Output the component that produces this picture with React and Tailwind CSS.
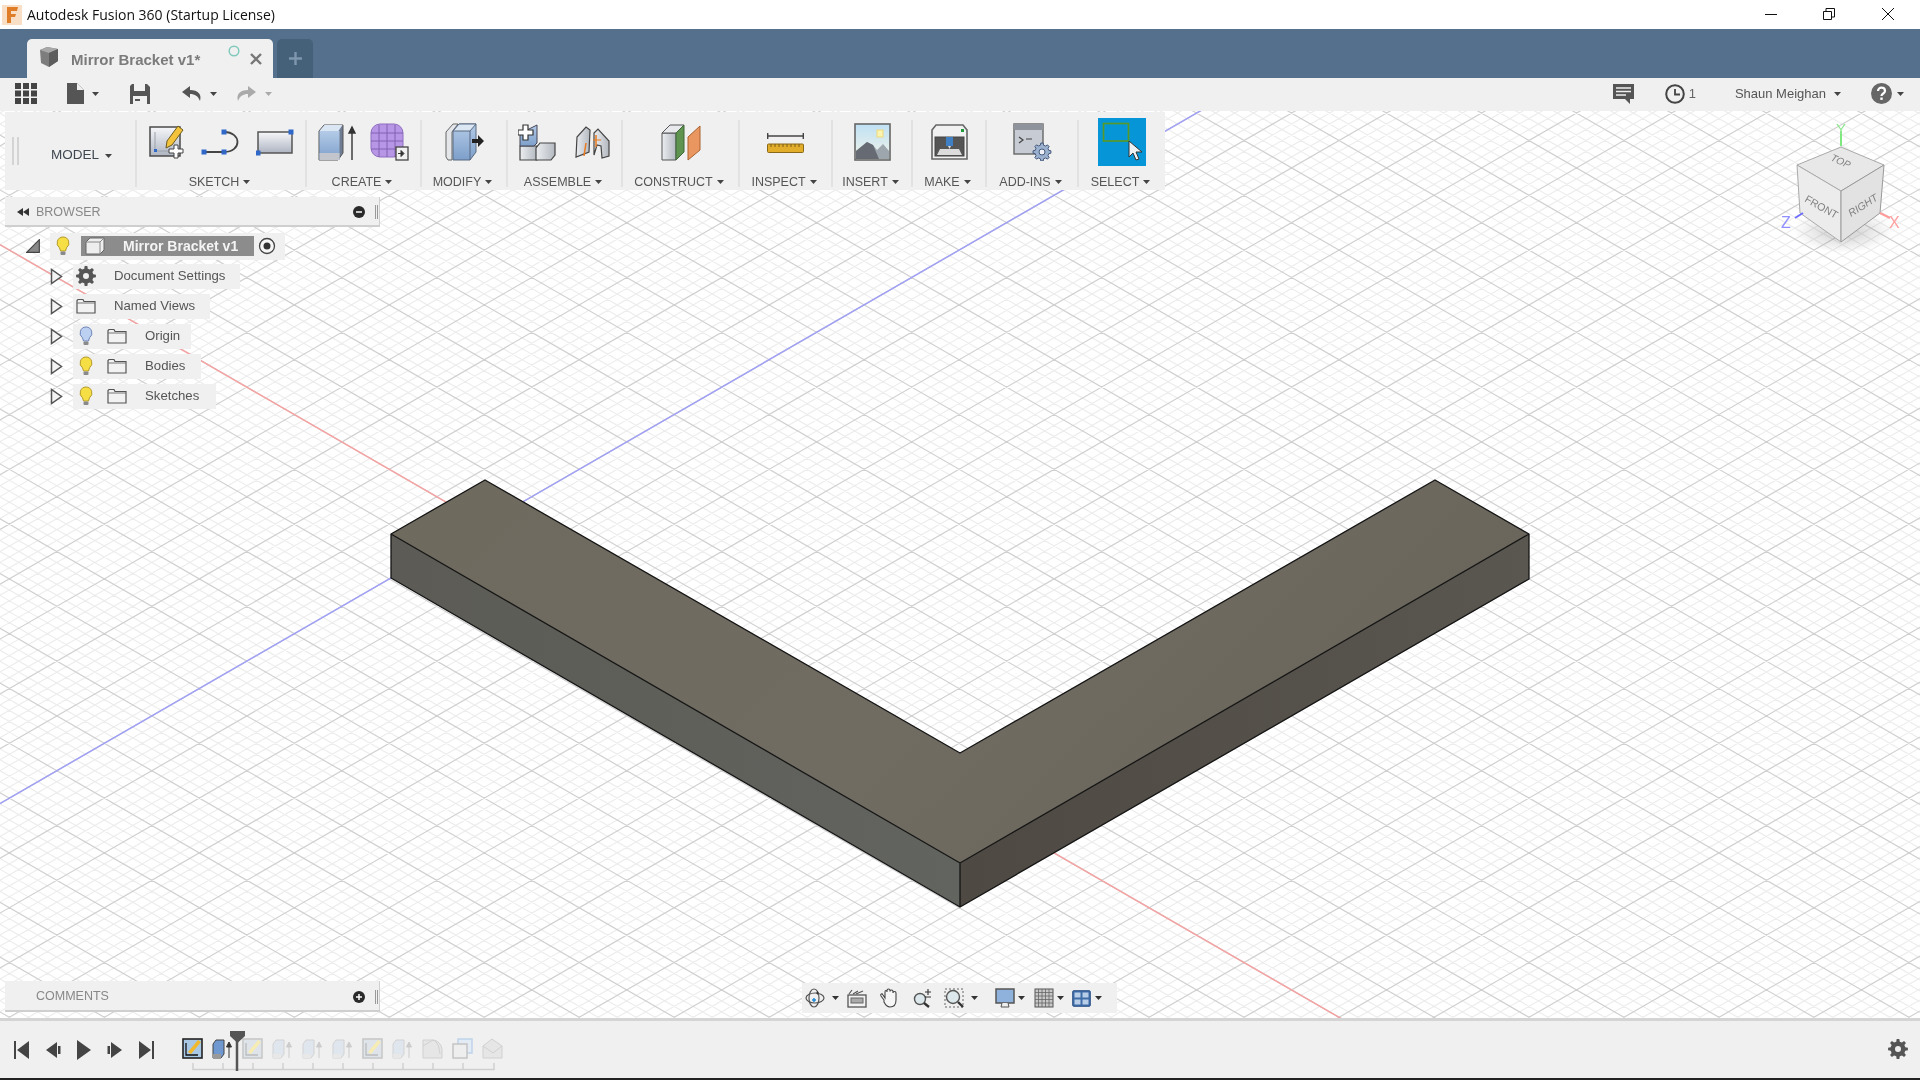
const M = 0.577;
function gridPaths() {
  let minor = "", major = "";
  const step = 54.8 / 5;
  for (let k = -300; k <= 200; k++) {
    const c = 628.3 + k * step;
    const d = `M0 ${c.toFixed(1)}L1920 ${(c + M * 1920).toFixed(1)}`;
    if (k % 5 === 0) major += d; else minor += d;
  }
  for (let k = -120; k <= 400; k++) {
    const c = 858.3 + k * step;
    const d = `M0 ${c.toFixed(1)}L1920 ${(c - M * 1920).toFixed(1)}`;
    if (k % 5 === 0) major += d; else minor += d;
  }
  return { minor, major };
}

function gearPath(cx, cy, ro, ri, n) {
  let d = "";
  const st = (Math.PI * 2) / n;
  for (let i = 0; i < n; i++) {
    const a = i * st;
    const pts = [[a - st * 0.3, ri], [a - st * 0.17, ro], [a + st * 0.17, ro], [a + st * 0.3, ri]];
    pts.forEach(([t, r], j) => {
      d += `${i === 0 && j === 0 ? "M" : "L"}${(cx + r * Math.cos(t)).toFixed(2)} ${(cy + r * Math.sin(t)).toFixed(2)}`;
    });
  }
  return d + "Z";
}

const Caret = ({ c = "#444" }) => (
  <svg width="7" height="4" viewBox="0 0 7 4" className="shrink-0"><path d="M0 0h7L3.5 4z" fill={c} /></svg>
);

const Defs = () => (
  <svg className="absolute w-0 h-0">
    <defs>
      <linearGradient id="gw" x1="0" y1="0" x2="0" y2="1"><stop offset="0" stopColor="#f6f7f9" /><stop offset="1" stopColor="#aeb4c2" /></linearGradient>
      <linearGradient id="gb" x1="0" y1="0" x2="0" y2="1"><stop offset="0" stopColor="#b4cbe8" /><stop offset="1" stopColor="#7d9fca" /></linearGradient>
      <linearGradient id="gg" x1="0" y1="0" x2="1" y2="0"><stop offset="0" stopColor="#eceef0" /><stop offset="1" stopColor="#b3b8c0" /></linearGradient>
      <linearGradient id="gs" x1="0" y1="0" x2="0" y2="1"><stop offset="0" stopColor="#bfe0f4" /><stop offset="1" stopColor="#f2f4e8" /></linearGradient>
      <linearGradient id="gt" x1="0" y1="0" x2="1" y2="0.35"><stop offset="0" stopColor="#6f6a5e" /><stop offset="0.6" stopColor="#716c62" /><stop offset="1" stopColor="#69655b" /></linearGradient>
      <linearGradient id="gl" x1="0" y1="0" x2="1" y2="0"><stop offset="0" stopColor="#5c5b55" /><stop offset="1" stopColor="#62645f" /></linearGradient>
      <linearGradient id="gr" x1="0" y1="0" x2="1" y2="0"><stop offset="0" stopColor="#4e4943" /><stop offset="1" stopColor="#5a5750" /></linearGradient>
      <radialGradient id="gsh"><stop offset="0" stopColor="#000" stopOpacity="0.2" /><stop offset="1" stopColor="#000" stopOpacity="0" /></radialGradient>
    </defs>
  </svg>
);

const Sq = ({ x, y }) => <rect x={x - 2.5} y={y - 2.5} width="5" height="5" fill="#2f68c8" />;

const ISketch = () => (
  <svg width="36" height="36" viewBox="0 0 36 36">
    <rect x="1" y="3" width="30" height="29" fill="url(#gw)" stroke="#4a4a4a" strokeWidth="1.5" />
    <path d="M6 8v19h20" fill="none" stroke="#9aa0aa" />
    <rect x="5" y="25" width="3" height="3" fill="#2f68c8" />
    <path d="M18 17L29 2l5 4-11 15-6 3z" fill="#f3c33c" stroke="#6a5a20" />
    <path d="M25 21h4v4h5v4h-5v5h-4v-5h-5v-4h5z" fill="#fff" stroke="#444" />
  </svg>
);
const ILine = () => (
  <svg width="39" height="28" viewBox="0 0 39 28">
    <path d="M3 24H23M23 4C41 4 41 24 23 24" fill="none" stroke="#444" strokeWidth="1.8" />
    <Sq x="3" y="24" /><Sq x="23" y="24" /><Sq x="23" y="4" />
  </svg>
);
const IRect = () => (
  <svg width="38" height="27" viewBox="0 0 38 27">
    <rect x="2" y="3" width="34" height="21" fill="url(#gw)" stroke="#555" strokeWidth="1.5" />
    <Sq x="35" y="3" /><Sq x="2" y="24" />
  </svg>
);
const IExtrude = () => (
  <svg width="38" height="38" viewBox="0 0 38 38">
    <path d="M1 8l5-6h19v28l-5 7H1z" fill="#6f7c92" stroke="#555" />
    <rect x="1.5" y="8" width="20" height="29" fill="url(#gb)" />
    <rect x="1.5" y="30" width="20" height="7" fill="#c2c6cc" />
    <path d="M1.5 8l5-6h18l-4 6z" fill="#dbe6f4" />
    <path d="M34 37V8M34 4l-3 6h6z" fill="#333" stroke="#333" strokeWidth="1.4" />
  </svg>
);
const IMesh = () => (
  <svg width="39" height="38" viewBox="0 0 39 38">
    <rect x="1" y="1" width="32" height="33" rx="9" fill="#b896e6" stroke="#8e6cc0" />
    <path d="M1 10h32M1 18h32M1 26h32M9 2v32M17 1v33M25 2v32" stroke="#7d5cae" strokeWidth="0.9" />
    <rect x="26" y="24" width="12" height="13" fill="#f0f0f0" stroke="#444" strokeWidth="1.3" />
    <path d="M28 30.500h4M31 27.500l3 3-3 3z" fill="#333" stroke="#333" />
  </svg>
);
const IModify = () => (
  <svg width="39" height="38" viewBox="0 0 39 38">
    <path d="M1 34V9l7-8h5L7 9v28H3z" fill="#e4e6ea" stroke="#666" />
    <path d="M8 37V8l6-7h17v28l-6 8z" fill="url(#gb)" stroke="#586880" />
    <path d="M8 8l6-7h17l-6 7z" fill="#dce7f4" stroke="#586880" />
    <path d="M25 8h0v29" stroke="#586880" />
    <path d="M27 16h6v-4l6 6-6 6v-4h-6z" fill="#222" />
  </svg>
);
const IAssemble = () => (
  <svg width="38" height="37" viewBox="0 0 38 37">
    <path d="M2 32V18h17v14z" fill="url(#gg)" stroke="#444" strokeWidth="1.2" transform="translate(0 4)" />
    <path d="M18 36V24l4-5h15v12l-4 5z" fill="url(#gg)" stroke="#444" strokeWidth="1.2" />
    <path d="M2 22V7h5l12-6v18l-3 3z" fill="url(#gb)" stroke="#445" strokeWidth="1" />
    <path d="M5 1h5v5h5v5h-5v5H5v-5H0V6h5z" fill="#fff" stroke="#333" strokeWidth="1.2" />
  </svg>
);
const IJoint = () => (
  <svg width="37" height="34" viewBox="0 0 37 34">
    <path d="M2 32L3 12 12 2l4 3-1 22z" fill="url(#gg)" stroke="#444" strokeWidth="1.2" />
    <path d="M20 30V8l4-4 11 12v15l-7 2-1-12-4-1z" fill="url(#gg)" stroke="#444" strokeWidth="1.2" />
    <path d="M12 18l-2 13M22 10v12" stroke="#e87a20" strokeWidth="1.5" />
    <path d="M19 15h8" stroke="#e87a20" />
  </svg>
);
const IConstruct = () => (
  <svg width="40" height="38" viewBox="0 0 40 38">
    <path d="M1 37V10h14v27z" fill="url(#gg)" stroke="#555" />
    <path d="M1 10l8-8h14l-8 8z" fill="#e8eaed" stroke="#555" />
    <path d="M15 37V10l8-8v27z" fill="#5f9350" stroke="#3f6636" />
    <path d="M27 37V14L39 3v24z" fill="#ea9660" stroke="#a8622e" />
  </svg>
);
const IInspect = () => (
  <svg width="37" height="21" viewBox="0 0 37 21">
    <path d="M.7 1v6M36.300 1v6M1 4h35" stroke="#444" strokeWidth="1.4" fill="none" />
    <rect x=".5" y="12" width="36" height="8.500" rx="1" fill="#e3ad2c" stroke="#8a6a18" />
    <path d="M4 12v3M8 12v3M12 12v3M16 12v3M20 12v3M24 12v3M28 12v3M32 12v3" stroke="#7a5c10" />
  </svg>
);
const IInsert = () => (
  <svg width="37" height="38" viewBox="0 0 37 38">
    <rect x="1" y="1" width="35" height="36" fill="url(#gs)" stroke="#666" strokeWidth="1.6" />
    <rect x="23" y="7" width="6" height="7" fill="#fbf3b0" stroke="#efd97a" />
    <path d="M2 36V28L13 19l6 3 4 5 6-6 6 7v8z" fill="#9da5ad" />
    <path d="M2 36V28L13 19l6 3 6 14z" fill="#666b73" />
  </svg>
);
const IMake = () => (
  <svg width="37" height="37" viewBox="0 0 37 37">
    <path d="M1 6l4-5h27l4 5v29H1z" fill="#f1f1f1" stroke="#666" strokeWidth="1.6" />
    <rect x="4" y="13" width="29" height="19" fill="#555" stroke="#444" />
    <rect x="15" y="13" width="7" height="9" fill="#3f7fc4" />
    <path d="M17 22h3l-1.500 3z" fill="#ddd" />
    <path d="M6 31l3-6h19l3 6z" fill="#dcdcdc" />
    <rect x="30" y="5" width="3" height="3" fill="#1d9a3a" />
  </svg>
);
const IAddins = () => (
  <svg width="39" height="38" viewBox="0 0 39 38">
    <rect x="1" y="1" width="29" height="30" fill="#c6cbd4" stroke="#666" strokeWidth="1.4" />
    <rect x="1" y="1" width="29" height="6" fill="#8f949c" />
    <path d="M6 14l4 3-4 3M13 16h6" stroke="#444" strokeWidth="1.2" fill="none" />
    <path d={gearPath(29, 29, 9, 7, 8)} fill="#9cb0cf" stroke="#465a7c" />
    <circle cx="29" cy="29" r="3" fill="#eef2f8" stroke="#465a7c" />
  </svg>
);
const ISelect = () => (
  <div className="w-[48px] h-[48px] bg-[#0696d7] shrink-0">
    <svg width="48" height="48" viewBox="0 0 48 48">
      <rect x="5.500" y="5.500" width="25" height="17.500" fill="none" stroke="#57982b" strokeWidth="1.7" />
      <path d="M31 23l0 16 4-4 3 7 3-1-3-7h6z" fill="#eef1f4" stroke="#333" strokeWidth="1" />
    </svg>
  </div>
);

const Group = ({ label, w, gap, children }) => (
  <div className={`flex flex-col items-center border-l-2 border-[#e2e2e2] mt-[8px] mb-[3px] ${w}`}>
    <div className={`h-[40px] mt-[2px] flex items-center justify-center ${gap}`}>{children}</div>
    <div className="mt-[15px] h-[10px] leading-[10px] text-[12.500px] text-[#555] flex items-center gap-[4px] whitespace-nowrap pr-[3px]">
      <span>{label}</span><Caret />
    </div>
  </div>
);

const Toolbar = () => (
  <div className="ml-[5px] w-[1160px] h-[78px] mt-px bg-[#f0f0f0] flex">
    <div className="w-[130px] flex items-center">
      <div className="ml-[7px] w-[7px] h-[28px] border-x-2 border-[#d4d4d4]" />
      <div className="ml-[32px] text-[13.500px] text-[#3f4852] flex items-center gap-[6px] mt-[9px]"><span>MODEL</span><Caret /></div>
    </div>
    <Group label="SKETCH" w="w-[170px]" gap="gap-[16px]"><ISketch /><ILine /><IRect /></Group>
    <Group label="CREATE" w="w-[115px]" gap="gap-[14px]"><IExtrude /><IMesh /></Group>
    <Group label="MODIFY" w="w-[86px]" gap="gap-0"><IModify /></Group>
    <Group label="ASSEMBLE" w="w-[115px]" gap="gap-[18px]"><IAssemble /><IJoint /></Group>
    <Group label="CONSTRUCT" w="w-[117px]" gap="gap-0"><IConstruct /></Group>
    <Group label="INSPECT" w="w-[93px]" gap="gap-0"><IInspect /></Group>
    <Group label="INSERT" w="w-[80px]" gap="gap-0"><IInsert /></Group>
    <Group label="MAKE" w="w-[74px]" gap="gap-0"><IMake /></Group>
    <Group label="ADD-INS" w="w-[92px]" gap="gap-0"><IAddins /></Group>
    <Group label="SELECT" w="w-[88px]" gap="gap-0"><ISelect /></Group>
  </div>
);

const Bulb = ({ c = "#f6df45", s = "#b59a2a" }) => (
  <svg width="14" height="20" viewBox="0 0 14 20" className="shrink-0">
    <path d="M7 1a6 6 0 0 0-3.500 10.800L4.500 15h5l1-3.200A6 6 0 0 0 7 1z" fill={c} stroke={s} strokeWidth="1" />
    <rect x="4.500" y="15.500" width="5" height="3.500" rx="1" fill="#8a8a8a" />
  </svg>
);
const Folder = () => (
  <svg width="20" height="16" viewBox="0 0 20 16" className="shrink-0">
    <path d="M1 2.500V15h18V3.500H8L7 1.500H2z" fill="#f2f2f2" stroke="#555" strokeWidth="1.200" />
    <path d="M1 5h18" stroke="#777" />
  </svg>
);
const Tri = () => (
  <svg width="13" height="17" viewBox="0 0 13 17" className="shrink-0">
    <path d="M1.500 1.500v14l10-7z" fill="#f4f4f4" stroke="#555" strokeWidth="1.500" />
  </svg>
);

const Row = ({ w, children, label, pad }) => (
  <div className="h-[30px] flex items-center pl-[50px]">
    <Tri />
    <div className={`ml-[10px] h-[25px] bg-[#f0f0f0] flex items-center ${w}`}>
      {children}
      <span className={`text-[13.200px] text-[#555] whitespace-nowrap ${pad}`}>{label}</span>
    </div>
  </div>
);

const Tree = () => (
  <div className="mt-[4px] flex flex-col">
    <div className="h-[30px] flex items-center pl-[26px]">
      <svg width="14" height="14" viewBox="0 0 14 14" className="shrink-0"><path d="M13.300 .7v12.600H.7z" fill="#888" stroke="#444" strokeWidth="1.200" /></svg>
      <div className="ml-[10px] w-[235px] h-[27px] bg-[#f0f0f0] flex items-center">
        <div className="ml-[6px]"><Bulb /></div>
        <div className="ml-[11px] w-[173px] h-[20px] bg-[#8c8c8c] flex items-center">
          <svg width="20" height="18" viewBox="0 0 20 18" className="ml-[4px] shrink-0"><path d="M1 5l4-4h14v12l-4 4H1z" fill="#eee" stroke="#666" /><path d="M1 5h14v12M15 5l4-4" fill="none" stroke="#888" /></svg>
          <span className="ml-[18px] text-[14px] font-bold text-[#f4f4f4] whitespace-nowrap">Mirror Bracket v1</span>
        </div>
        <svg width="18" height="18" viewBox="0 0 18 18" className="ml-[4px] shrink-0"><circle cx="9" cy="9" r="7.500" fill="#f6f6f6" stroke="#444" strokeWidth="1.300" /><circle cx="9" cy="9" r="3.500" fill="#333" /></svg>
      </div>
    </div>
    <Row w="w-[167px]" label="Document Settings" pad="ml-[18px]">
      <svg width="20" height="20" viewBox="0 0 20 20" className="ml-[3px] shrink-0"><path d={gearPath(10, 10, 10, 7.5, 8) + "M13 10a3 3 0 1 0-6 0a3 3 0 1 0 6 0z"} fill="#555" fillRule="evenodd" /></svg>
    </Row>
    <Row w="w-[137px]" label="Named Views" pad="ml-[18px]"><div className="ml-[3px]"><Folder /></div></Row>
    <Row w="w-[118px]" label="Origin" pad="ml-[18px]">
      <div className="ml-[6px]"><Bulb c="#bcd0f2" s="#6f86b8" /></div><div className="ml-[14px]"><Folder /></div>
    </Row>
    <Row w="w-[128px]" label="Bodies" pad="ml-[18px]">
      <div className="ml-[6px]"><Bulb /></div><div className="ml-[14px]"><Folder /></div>
    </Row>
    <Row w="w-[143px]" label="Sketches" pad="ml-[18px]">
      <div className="ml-[6px]"><Bulb /></div><div className="ml-[14px]"><Folder /></div>
    </Row>
  </div>
);

const CircleSign = ({ plus }) => (
  <svg width="12" height="12" viewBox="0 0 12 12" className="shrink-0">
    <circle cx="6" cy="6" r="6" fill="#2a2a2a" />
    <path d={plus ? "M3 6h6M6 3v6" : "M3 6h6"} stroke="#fff" strokeWidth="1.500" />
  </svg>
);
const Grip = () => <div className="ml-[10px] w-[3px] h-[14px] border-x border-[#999]" />;

const Panel = ({ label, plus, lead, h }) => (
  <div className={`ml-[5px] w-[375px] bg-[#f0f0f0] border-b-2 border-r border-[#cfcfcf] flex items-center pr-px pt-[2px] ${h}`}>
    <div className="w-[31px] flex justify-end pr-[7px]">{lead}</div>
    <span className="text-[12.500px] text-[#888] flex-1">{label}</span>
    <CircleSign plus={plus} />
    <Grip />
  </div>
);

const IconI = ({ children, w = 20, h = 20, vb }) => (
  <svg width={w} height={h} viewBox={vb || `0 0 ${w} ${h}`} className="shrink-0">{children}</svg>
);

const NavBar = () => (
  <div className="absolute left-[802px] bottom-[5px] w-[315px] h-[30px] bg-[#f0f0f0] flex items-center pl-[3px]">
    <IconI>
      <ellipse cx="10" cy="10" rx="9" ry="5" fill="none" stroke="#555" strokeWidth="1.200" />
      <ellipse cx="9" cy="10" rx="5" ry="9" fill="none" stroke="#555" strokeWidth="1.200" />
      <path d="M7 12h4M9 10v4" stroke="#1f88d8" strokeWidth="1.500" />
      <path d="M11 5h3M12.500 3.500v3" stroke="#333" />
    </IconI>
    <div className="ml-[7px]"><Caret c="#333" /></div>
    <div className="ml-[8px]"><IconI>
      <rect x="1" y="7" width="18" height="12" fill="#f2f2f2" stroke="#555" strokeWidth="1.300" />
      <rect x="4" y="10" width="12" height="5" fill="#aaa" stroke="#666" />
      <path d="M2 6l3-4M6 6l5-3M9 6l7-3" stroke="#555" strokeWidth="1.200" />
    </IconI></div>
    <div className="ml-[12px]"><IconI>
      <path d="M5 12L2 8c-1-2 1-3 2-1l2 3V4c0-2 2-2 2 0V2.500c0-2 3-2 3 0V3.500c0-2 3-2 3 0V5c0-2 3-2 3 0v7c0 4-2 7-6 7s-5-3-6-5z" fill="#f6f6f6" stroke="#444" strokeWidth="1.100" />
    </IconI></div>
    <div className="ml-[13px]"><IconI>
      <circle cx="8" cy="11" r="5.500" fill="#dce8ec" stroke="#555" strokeWidth="1.400" />
      <path d="M12 15l5 4" stroke="#333" strokeWidth="2.400" />
      <path d="M13 4h6M16 1v6M13 9h6" stroke="#333" strokeWidth="1.100" />
    </IconI></div>
    <div className="ml-[12px]"><IconI>
      <rect x="1" y="1" width="18" height="18" fill="none" stroke="#666" strokeDasharray="2 2" />
      <circle cx="9" cy="9" r="6.500" fill="#dce8ec" stroke="#555" strokeWidth="1.400" />
      <path d="M14 14l5 5" stroke="#333" strokeWidth="2.400" />
    </IconI></div>
    <div className="ml-[7px]"><Caret c="#333" /></div>
    <div className="ml-[17px]"><IconI>
      <rect x="1" y="1" width="18" height="14" fill="#8fb2dc" stroke="#555" strokeWidth="1.500" />
      <path d="M7 15l-1 4h8l-1-4" fill="#eee" stroke="#555" />
    </IconI></div>
    <div className="ml-[3px]"><Caret c="#333" /></div>
    <div className="ml-[9px]"><IconI>
      <rect x="1" y="1" width="18" height="18" fill="#c8c8c8" stroke="#555" />
      <path d="M4.500 1v18M8 1v18M11.500 1v18M15 1v18M1 4.500h18M1 8h18M1 11.500h18M1 15h18" stroke="#666" strokeWidth=".8" />
    </IconI></div>
    <div className="ml-[3px]"><Caret c="#333" /></div>
    <div className="ml-[8px]"><IconI w={19} h={17} vb="0 0 19 17">
      <rect x=".7" y=".7" width="17.600" height="15.600" rx="1" fill="#3e6da8" stroke="#2d5288" />
      <rect x="2.500" y="2.500" width="6" height="5" fill="#b7cde8" /><rect x="10.500" y="2.500" width="6" height="5" fill="#b7cde8" />
      <rect x="2.500" y="9.500" width="6" height="5" fill="#b7cde8" /><rect x="10.500" y="9.500" width="6" height="5" fill="#b7cde8" />
    </IconI></div>
    <div className="ml-[4px]"><Caret c="#333" /></div>
  </div>
);

const ViewCube = () => (
  <svg width="140" height="140" viewBox="0 0 140 140" className="absolute left-[1770px] top-[10px]">
    <ellipse cx="73" cy="110" rx="50" ry="22" fill="url(#gsh)" />
    <path d="M71 26L27 44 30 92 71 121 110 92 114 44z" fill="#f1f1f1" opacity="0.85" />
    <path d="M71 26L27 44 71 70 114 44z" fill="#e8e8e8" stroke="#aaa" />
    <path d="M27 44l3 48 41 29V70z" fill="#ececec" stroke="#aaa" />
    <path d="M71 70v51l39-29 4-48z" fill="#e2e2e2" stroke="#999" />
    <text x="0" y="0" transform="translate(60 39) rotate(25)" fontSize="10" fontStyle="italic" fill="#808080">TOP</text>
    <text x="0" y="0" transform="translate(34 80) rotate(30)" fontSize="10.500" fill="#808080">FRONT</text>
    <text x="0" y="0" transform="translate(81 96) rotate(-32)" fontSize="10.500" fontStyle="italic" fill="#808080">RIGHT</text>
    <path d="M71 10v15" stroke="#7fe87f" strokeWidth="2" />
    <path d="M25 97l8-5" stroke="#6f6fff" strokeWidth="2" />
    <path d="M110 92l10 5" stroke="#ff9a9a" strokeWidth="2" />
    <text x="66" y="13" fontSize="15" fill="#8fe88f">Y</text>
    <text x="11" y="107" fontSize="16" fill="#8f8fff">Z</text>
    <text x="119" y="107" fontSize="16" fill="#ff9f9f">X</text>
  </svg>
);

const Viewport = () => {
  const g = gridPaths();
  return (
    <svg className="absolute inset-0" width="1920" height="907" viewBox="0 111 1920 907">
      <path d={g.minor} stroke="#ededed" strokeWidth="1.200" fill="none" />
      <path d={g.major} stroke="#d0d0d0" strokeWidth="1.200" fill="none" />
      <path d="M0 244.700L1400 1052.500" stroke="#f4a3a3" strokeWidth="1.500" />
      <path d="M0 803.500L1300 53.400" stroke="#a0a0f4" strokeWidth="1.500" />
      <path d="M391 534L960 863V907L391 578z" fill="url(#gl)" />
      <path d="M960 863L1529 534V579L960 907z" fill="url(#gr)" />
      <path d="M391 534L485 480L960 753L1435 480L1529 534L960 863z" fill="url(#gt)" />
      <path d="M391 534L485 480L960 753L1435 480L1529 534L960 863zM391 534V578L960 907L1529 579V534M960 863V907" fill="none" stroke="#141414" strokeWidth="1.300" strokeLinejoin="round" />
    </svg>
  );
};

const TLSketch = ({ f }) => (
  <IconI w={21} h={21}>
    <rect x="1" y="1" width="19" height="19" fill={f ? "#dfe4ea" : "#a9c8e6"} stroke={f ? "#c8c8c8" : "#222"} strokeWidth="1.600" />
    <path d="M4 5v12h12" fill="none" stroke={f ? "#bbb" : "#111"} strokeWidth="1.300" />
    <path d="M6 14L16 2l3 2L9 16z" fill={f ? "#f6ecb4" : "#f2b92e"} />
  </IconI>
);
const TLExtrude = ({ f }) => (
  <IconI w={21} h={21}>
    <path d="M1 20V6l3-4h8v14l-3 4z" fill={f ? "#e0e6ee" : "#6f98d0"} stroke={f ? "#d2d2d2" : "#444"} />
    <path d="M1 16h8v4H1z" fill={f ? "#e8e8e8" : "#999"} />
    <path d="M17 20V6M14.500 9L17 4l2.500 5z" fill={f ? "#ccc" : "#333"} stroke={f ? "#ccc" : "#333"} />
  </IconI>
);
const TLFillet = () => (
  <IconI w={21} h={21}><path d="M1 20V2h9c6 0 10 5 10 10v8z" fill="#e6e6e6" stroke="#d0d0d0" /><path d="M1 8l10-6M11 2c5 2 6 7 7 14" fill="none" stroke="#d0d0d0" /></IconI>
);
const TLCombine = () => (
  <IconI w={21} h={21}><rect x="6" y="1" width="14" height="14" fill="#e3ebf5" stroke="#bfd3ea" strokeWidth="1.500" /><rect x="1" y="6" width="14" height="14" fill="#eeeeee" stroke="#c4c4c4" strokeWidth="1.500" /></IconI>
);
const TLChamfer = () => (
  <IconI w={21} h={21}><path d="M1 20V8l9-7 10 7v12z" fill="#e6e6e6" stroke="#d0d0d0" /><path d="M1 8l10 7 9-7" fill="none" stroke="#d0d0d0" /></IconI>
);

const TLCell = ({ children }) => <div className="w-[30px] flex justify-start">{children}</div>;

const Timeline = () => (
  <div className="h-[60px] bg-[#f0f0f0] border-t-[3px] border-[#d4d4d4] flex items-center relative shrink-0">
    <div className="ml-[14px] flex items-center gap-[15px]">
      <IconI w={16} h={18}><path d="M1 0v18" stroke="#444" strokeWidth="2" /><path d="M15 0v18L3 9z" fill="#444" /></IconI>
      <IconI w={16} h={18}><path d="M12 1v16L1 9z" fill="#444" /><rect x="13" y="5" width="2.500" height="8" fill="#444" /></IconI>
      <IconI w={16} h={20}><path d="M1 0v20l14-10z" fill="#444" /></IconI>
      <IconI w={16} h={18}><path d="M4 1v16l11-8z" fill="#444" /><rect x=".5" y="5" width="2.500" height="8" fill="#444" /></IconI>
      <IconI w={16} h={18}><path d="M15 0v18" stroke="#444" strokeWidth="2" /><path d="M1 0v18L13 9z" fill="#444" /></IconI>
    </div>
    <div className="ml-[28px] flex items-center -mt-[2px]">
      <TLCell><TLSketch /></TLCell><TLCell><TLExtrude /></TLCell>
      <TLCell><TLSketch f /></TLCell><TLCell><TLExtrude f /></TLCell><TLCell><TLExtrude f /></TLCell><TLCell><TLExtrude f /></TLCell>
      <TLCell><TLSketch f /></TLCell><TLCell><TLExtrude f /></TLCell>
      <TLCell><TLFillet /></TLCell><TLCell><TLCombine /></TLCell><TLCell><TLChamfer /></TLCell>
    </div>
    <svg width="310" height="45" viewBox="0 0 310 45" className="absolute left-[190px] top-[10px]">
      <path d="M3 32v6.500H304V32M33 32v6M63 32v6M93 32v6M123 32v6M153 32v6M183 32v6M213 32v6M243 32v6M273 32v6" fill="none" stroke="#cfcfcf" strokeWidth="1.500" />
      <path d="M47 0v40" stroke="#555" strokeWidth="2.500" />
      <path d="M40 0h15v5l-7.500 7L40 5z" fill="#555" />
    </svg>
    <svg width="20" height="20" viewBox="0 0 20 20" className="absolute left-[1888px] top-[18px]">
      <path d={gearPath(10, 10, 10, 7.5, 8) + "M13 10a3 3 0 1 0-6 0a3 3 0 1 0 6 0z"} fill="#555" fillRule="evenodd" />
    </svg>
  </div>
);

export default function App() {
  return (
    <div className="w-[1920px] h-[1080px] overflow-hidden flex flex-col bg-white blur-[0.4px] [font-family:'Liberation_Sans',Arial,sans-serif]">
      <Defs />
      <div className="h-[29px] bg-white flex items-center shrink-0">
        <svg width="20" height="20" viewBox="0 0 20 20" className="ml-[2px] shrink-0">
          <rect width="20" height="20" fill="#f9dfc6" />
          <path d="M5 2h11l-1 4H9v3h5l-1 3H9v6H5z" fill="#e07d28" />
        </svg>
        <span className="ml-[5px] text-[14px] text-[#111] whitespace-nowrap [font-family:'Open_Sans',sans-serif]">Autodesk Fusion 360 (Startup License)</span>
        <div className="ml-auto flex items-center mr-[26px] pb-px">
          <svg width="12" height="12" viewBox="0 0 12 12"><path d="M0 6.500h12" stroke="#111" /></svg>
          <svg width="12" height="12" viewBox="0 0 12 12" className="ml-[46px]"><path d="M.5 3.500h8v8h-8zM3 3V.5h8.500V9H9" fill="none" stroke="#111" /></svg>
          <svg width="12" height="12" viewBox="0 0 12 12" className="ml-[47px]"><path d="M0 0l12 12M12 0L0 12" stroke="#111" /></svg>
        </div>
      </div>
      <div className="h-[49px] bg-[#55708c] flex items-end pl-[27px] gap-[4px] shrink-0">
        <div className="w-[246px] h-[39px] bg-[#f0f0f0] rounded-t-[5px] flex items-start pl-[12px] relative">
          <svg width="20" height="20" viewBox="0 0 20 20" className="mt-[8px] shrink-0">
            <path d="M1 3l7-3 11 2v12l-9 6-8-4z" fill="#7d7d7d" />
            <path d="M1 3l9 3 9-4-11-2z" fill="#a8a8a8" />
            <path d="M10 6v14l9-6V2z" fill="#5d5d5d" />
          </svg>
          <span className="ml-[12px] mt-[12px] text-[15px] leading-[17px] font-bold text-[#7b7b7b] whitespace-nowrap">Mirror Bracket v1*</span>
          <svg width="12" height="12" viewBox="0 0 12 12" className="ml-[28px] mt-[6px] shrink-0"><circle cx="6" cy="6" r="4.800" fill="none" stroke="#7fcabc" strokeWidth="1.500" /></svg>
          <svg width="12" height="12" viewBox="0 0 12 12" className="ml-[10px] mt-[14px] shrink-0"><path d="M1 1l10 10M11 1L1 11" stroke="#777" strokeWidth="2.400" /></svg>
        </div>
        <div className="w-[36px] h-[39px] bg-[#456079] rounded-t-[5px] flex items-center justify-center">
          <svg width="13" height="13" viewBox="0 0 13 13"><path d="M6.500 0v13M0 6.500h13" stroke="#7e97ae" strokeWidth="2.400" /></svg>
        </div>
      </div>
      <div className="h-[33px] bg-[#f0f0f0] flex items-center pl-[15px] pb-[2px] shrink-0">
        <svg width="22" height="21" viewBox="0 0 22 21" className="shrink-0"><path d="M0 0h6v6H0zM8 0h6v6H8zM16 0h6v6h-6zM0 7.500h6v6H0zM8 7.500h6v6H8zM16 7.500h6v6h-6zM0 15h6v6H0zM8 15h6v6H8zM16 15h6v6h-6z" fill="#444" /></svg>
        <svg width="17" height="21" viewBox="0 0 17 21" className="ml-[30px] shrink-0"><path d="M0 0h10l7 7v14H0z" fill="#555" /><path d="M10 0v7h7" fill="#eee" /></svg>
        <div className="ml-[8px]"><Caret /></div>
        <svg width="20" height="20" viewBox="0 0 20 20" className="ml-[31px] shrink-0"><path d="M0 2l2-2h15l3 3v17H0z" fill="#555" /><rect x="4" y="0" width="11" height="7" fill="#f0f0f0" /><rect x="3" y="12" width="14" height="8" fill="#f0f0f0" /><rect x="5" y="15" width="5" height="2" fill="#555" /></svg>
        <svg width="20" height="15" viewBox="0 0 20 15" className="ml-[32px] shrink-0"><path d="M8 0L0 6l8 6V8c5 0 8 2 10 7 2-7-2-11-10-11z" fill="#555" /></svg>
        <div className="ml-[8px]"><Caret /></div>
        <svg width="20" height="15" viewBox="0 0 20 15" className="ml-[19px] shrink-0"><path d="M12 0l8 6-8 6V8C7 8 4 10 2 15 0 8 4 4 12 4z" fill="#aaa" /></svg>
        <div className="ml-[9px]"><Caret c="#aaa" /></div>
        <svg width="21" height="20" viewBox="0 0 21 20" className="ml-auto shrink-0"><path d="M0 0h21v15h-4v5l-5-5H0z" fill="#555" /><path d="M3 4h15M3 7.500h15M3 11h10" stroke="#f0f0f0" strokeWidth="1.300" /></svg>
        <svg width="20" height="20" viewBox="0 0 20 20" className="ml-[31px] shrink-0"><circle cx="10" cy="10" r="8.800" fill="none" stroke="#444" strokeWidth="2" /><path d="M10 5v5.500h5" fill="none" stroke="#444" strokeWidth="1.800" /></svg>
        <span className="ml-[4px] text-[13px] text-[#666]">1</span>
        <span className="ml-[39px] text-[13px] text-[#555] whitespace-nowrap">Shaun Meighan</span>
        <div className="ml-[8px]"><Caret /></div>
        <svg width="21" height="21" viewBox="0 0 21 21" className="ml-[30px] shrink-0"><circle cx="10.500" cy="10.500" r="10.500" fill="#666" /><path d="M7 8c0-4.500 7-4.500 7 0 0 2.500-3.500 2.500-3.500 5" fill="none" stroke="#fff" strokeWidth="2.200" /><rect x="9.300" y="14.500" width="2.400" height="2.400" fill="#fff" /></svg>
        <div className="ml-[5px] mr-[16px]"><Caret /></div>
      </div>
      <div className="flex-1 relative min-h-0">
        <Viewport />
        <div className="absolute inset-0 flex flex-col">
          <Toolbar />
          <div className="mt-[7px]">
            <Panel h="h-[30px]" label="BROWSER" lead={<svg width="12" height="8" viewBox="0 0 12 8"><path d="M6 0v8L0 4zM12 0v8L6 4z" fill="#333" /></svg>} />
          </div>
          <Tree />
          <div className="mt-auto mb-[6px]">
            <Panel h="h-[31px]" label="COMMENTS" plus lead={null} />
          </div>
        </div>
        <NavBar />
        <ViewCube />
      </div>
      <Timeline />
      <div className="h-[2px] bg-[#222] shrink-0" />
    </div>
  );
}
